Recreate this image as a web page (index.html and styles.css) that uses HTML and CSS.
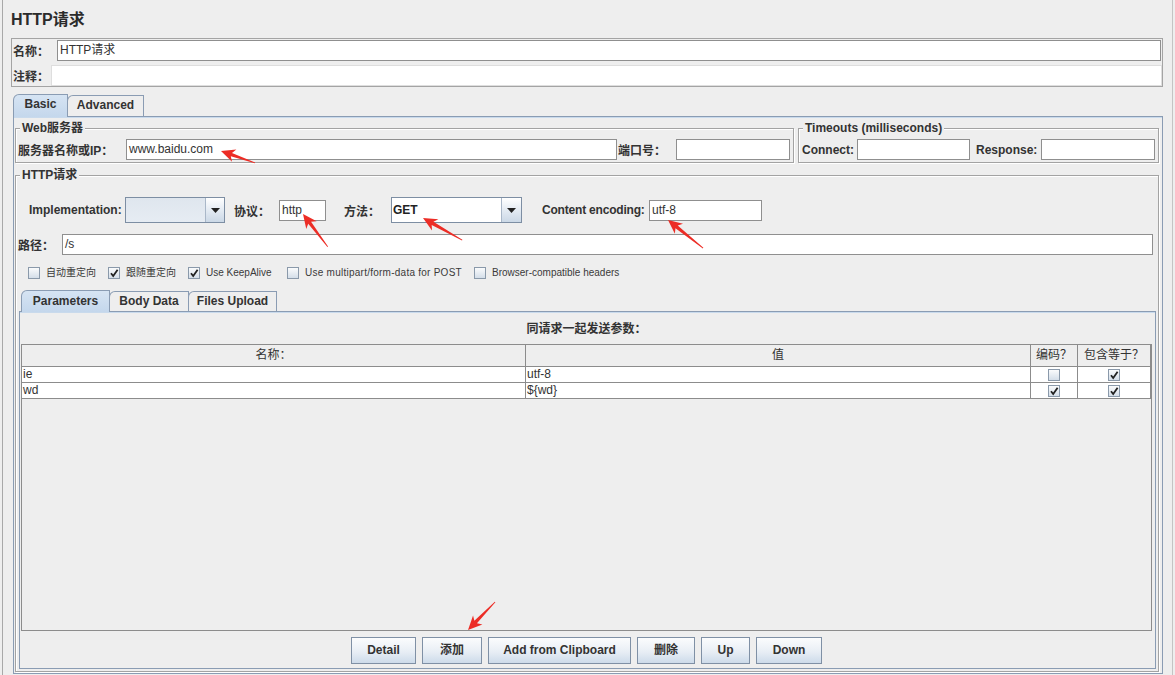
FILE: index.html
```html
<!DOCTYPE html>
<html lang="zh">
<head>
<meta charset="utf-8">
<title>HTTP请求</title>
<link rel="stylesheet" href="styles.css">
</head>
<body>
<div class="window">
  <div class="frame">
    <h1 class="title">HTTP请求</h1>
    <div class="namebox">
      <div class="frow"><span class="lbl w-name">名称：</span><div class="field f-name">HTTP请求</div></div>
      <div class="frow"><span class="lbl w-comment">注释：</span><div class="field f-comment"></div></div>
    </div>

    <div class="tabs outer-tabs">
      <div class="tab active t-basic">Basic</div>
      <div class="tab t-adv">Advanced</div>
    </div>
    <div class="tabpanel outer-panel">
      <div class="toprow">
        <fieldset class="group g-web">
          <legend>Web服务器</legend>
          <div class="frow grow-row">
            <span class="lbl w-host">服务器名称或IP：</span>
            <div class="field f-host">www.baidu.com</div>
            <span class="lbl w-port">端口号：</span>
            <div class="field f-port"></div>
          </div>
        </fieldset>
        <fieldset class="group g-timeout">
          <legend>Timeouts (milliseconds)</legend>
          <div class="frow grow-row">
            <span class="lbl w-connect">Connect:</span>
            <div class="field f-connect"></div>
            <span class="lbl w-response">Response:</span>
            <div class="field f-response"></div>
          </div>
        </fieldset>
      </div>

      <fieldset class="group g-http">
        <legend>HTTP请求</legend>
        <div class="frow impl-row">
          <span class="lbl w-impl">Implementation:</span>
          <div class="combo c-impl">
            <div class="combo-value"></div>
            <div class="combo-btn"><svg width="9" height="5" viewBox="0 0 9 5"><path d="M0 0H9L4.5 5Z" fill="#222"/></svg></div>
          </div>
          <span class="lbl w-proto">协议：</span>
          <div class="field f-proto">http</div>
          <span class="lbl w-method">方法：</span>
          <div class="combo c-method">
            <div class="combo-value">GET</div>
            <div class="combo-btn"><svg width="9" height="5" viewBox="0 0 9 5"><path d="M0 0H9L4.5 5Z" fill="#222"/></svg></div>
          </div>
          <span class="lbl w-enc">Content encoding:</span>
          <div class="field f-enc">utf-8</div>
        </div>

        <div class="frow path-row">
          <span class="lbl w-path">路径：</span>
          <div class="field f-path">/s</div>
        </div>

        <div class="checks">
          <div class="check ck1"><span class="cb"></span><span>自动重定向</span></div>
          <div class="check ck2"><span class="cb"><svg width="10" height="10" viewBox="0 0 10 10"><path d="M2 5.2L4.2 8L8.6 1.8" fill="none" stroke="#222" stroke-width="1.8"/></svg></span><span>跟随重定向</span></div>
          <div class="check ck3"><span class="cb"><svg width="10" height="10" viewBox="0 0 10 10"><path d="M2 5.2L4.2 8L8.6 1.8" fill="none" stroke="#222" stroke-width="1.8"/></svg></span><span>Use KeepAlive</span></div>
          <div class="check ck4"><span class="cb"></span><span>Use multipart/form-data for POST</span></div>
          <div class="check ck5"><span class="cb"></span><span>Browser-compatible headers</span></div>
        </div>

        <div class="tabs inner-tabs">
          <div class="tab active t-params">Parameters</div>
          <div class="tab t-body">Body Data</div>
          <div class="tab t-files">Files Upload</div>
        </div>
        <div class="tabpanel inner-panel">
          <div class="params-title">同请求一起发送参数：</div>
          <div class="scroll">
            <div class="grid">
              <div class="hd">名称：</div>
              <div class="hd">值</div>
              <div class="hd">编码？</div>
              <div class="hd">包含等于？</div>

              <div class="cell">ie</div>
              <div class="cell">utf-8</div>
              <div class="cell cbcell"><span class="cb"></span></div>
              <div class="cell cbcell"><span class="cb"><svg width="10" height="10" viewBox="0 0 10 10"><path d="M2 5.2L4.2 8L8.6 1.8" fill="none" stroke="#222" stroke-width="1.8"/></svg></span></div>

              <div class="cell">wd</div>
              <div class="cell">${wd}</div>
              <div class="cell cbcell"><span class="cb"><svg width="10" height="10" viewBox="0 0 10 10"><path d="M2 5.2L4.2 8L8.6 1.8" fill="none" stroke="#222" stroke-width="1.8"/></svg></span></div>
              <div class="cell cbcell"><span class="cb"><svg width="10" height="10" viewBox="0 0 10 10"><path d="M2 5.2L4.2 8L8.6 1.8" fill="none" stroke="#222" stroke-width="1.8"/></svg></span></div>
            </div>
          </div>
          <div class="buttons">
            <div class="btn b-detail">Detail</div>
            <div class="btn b-add">添加</div>
            <div class="btn b-clip">Add from Clipboard</div>
            <div class="btn b-del">删除</div>
            <div class="btn b-up">Up</div>
            <div class="btn b-down">Down</div>
          </div>
        </div>
      </fieldset>
    </div>
  </div>

  <svg class="annot" width="1175" height="675" viewBox="0 0 1175 675">
    <g fill="#ec2d26">
      <g transform="translate(221 151) rotate(199.4)"><polygon points="0,0 -14,-6.5 -11,-1.8 -36,-0.4 -36,0.4 -11,1.8 -14,6.5"/></g>
      <g transform="translate(303 214) rotate(232.9)"><polygon points="0,0 -14,-6.5 -11,-1.8 -41,-0.4 -41,0.4 -11,1.8 -14,6.5"/></g>
      <g transform="translate(423 218) rotate(209.4)"><polygon points="0,0 -14,-6.5 -11,-1.8 -45,-0.4 -45,0.4 -11,1.8 -14,6.5"/></g>
      <g transform="translate(668 220) rotate(218.7)"><polygon points="0,0 -14,-6.5 -11,-1.8 -45,-0.4 -45,0.4 -11,1.8 -14,6.5"/></g>
      <g transform="translate(468 630) rotate(134)"><polygon points="0,0 -14,-6.5 -11,-1.8 -39,-0.4 -39,0.4 -11,1.8 -14,6.5"/></g>
    </g>
  </svg>
</div>
</body>
</html>
```

FILE: styles.css
```css
* { box-sizing: border-box; }
html, body { margin: 0; padding: 0; }
body {
  background: #eeeeee;
  font-family: "Liberation Sans", "Noto Sans CJK SC", sans-serif;
  color: #333333;
  font-size: 12px;
}
.window {
  position: relative;
  width: 1175px;
  height: 675px;
  overflow: hidden;
  background: #eeeeee;
}
.frame {
  margin-left: 2px;
  width: 1171px;
  height: 675px;
  border-left: 1px solid #a8a8a8;
  border-right: 1px solid #c4c4c4;
  padding: 10px 0 0 8px;
}
.title {
  margin: 0;
  font-size: 16px;
  font-weight: bold;
  line-height: 20px;
  height: 20px;
  color: #2b2b2b;
}

/* generic rows / labels / fields */
.frow { display: flex; align-items: center; }
.lbl { flex: none; font-weight: bold; font-size: 12px; white-space: nowrap; color: #333; }
.field {
  flex: none;
  height: 21px;
  border: 1px solid #8f8f8f;
  background: #ffffff;
  padding-left: 2px;
  line-height: 19px;
  font-size: 12px;
  white-space: nowrap;
  overflow: hidden;
  color: #333;
}

/* name / comment box */
.namebox {
  margin-top: 8px;
  width: 1152px;
  border: 1px solid #a4a4a4;
  padding-top: 1px;
  display: flex;
  flex-direction: column;
  gap: 4px;
}
.w-name { width: 45px; padding-left: 1px; }
.f-name { width: 1104px; }
.w-comment { width: 39px; padding-left: 1px; }
.f-comment { width: 1111px; border-color: #dedede; }

/* tabs */
.tabs { display: flex; align-items: flex-end; position: relative; z-index: 2; }
.tab {
  flex: none;
  height: 21px;
  border: 1px solid #8a9cb3;
  border-bottom: none;
  border-top-left-radius: 6px;
  background: #eeeeee;
  font-weight: bold;
  font-size: 12px;
  line-height: 18px;
  text-align: center;
  color: #333;
}
.tab + .tab { margin-left: -1px; }
.tab.active {
  background: linear-gradient(#d6e4f3, #c4d7ec);
  margin-bottom: -1px;
  height: 23px;
  line-height: 19px;
  padding-bottom: 1px;
}
.outer-tabs { margin-top: 7px; margin-left: 2px; height: 22px; }
.t-basic { width: 55px; }
.t-adv { width: 77px; }

.tabpanel {
  border: 1px solid #8a9cb3;
  box-shadow: inset 0 1px 0 #c9daec;
  position: relative;
  z-index: 1;
}
.outer-panel {
  margin-left: 2px;
  width: 1150px;
  padding: 4px 3px 1px 1px;
}

/* group boxes (etched) */
.group {
  margin: 0;
  min-width: 0;
  border: 1px solid #a3a3a3;
  box-shadow: inset 1px 1px 0 #ffffff, 1px 1px 0 #ffffff;
  padding: 0 2px 2px 2px;
}
.group legend {
  padding: 0 2px;
  margin-left: 2px;
  font-weight: bold;
  font-size: 12px;
  line-height: 14px;
  height: 14px;
  background: #eeeeee;
  color: #333;
}
.toprow { display: flex; gap: 4px; }
.g-web { width: 779px; }
.g-timeout { width: 361px; }
.grow-row { margin-top: 4px; }

.w-host { width: 108px; }
.f-host { width: 491px; }
.w-port { width: 59px; padding-left: 1px; }
.f-port { width: 114px; }
.w-connect { width: 56px; padding-left: 1px; }
.f-connect { width: 113px; }
.w-response { width: 71px; padding-left: 6px; }
.f-response { width: 114px; }

/* HTTP request group */
.g-http {
  margin-top: 5px;
  width: 1144px;
  padding: 0 3px 2px 2px;
}
.impl-row { margin-top: 15px; height: 26px; padding-left: 11px; }
.w-impl { width: 96px; }
.w-proto { width: 54px; padding-left: 9px; }
.f-proto { width: 47px; }
.w-method { width: 65px; padding-left: 18px; }
.w-enc { width: 127px; padding-left: 20px; letter-spacing: -0.2px; }
.f-enc { width: 113px; }

.combo {
  flex: none;
  display: flex;
  height: 26px;
  border: 1px solid #7d8ea3;
}
.c-impl { width: 100px; }
.c-method { width: 131px; }
.combo-value {
  flex: 1;
  font-size: 12px;
  line-height: 24px;
  padding-left: 1px;
  color: #222;
}
.c-impl .combo-value { background: linear-gradient(#dfe6ee, #e6ecf3); }
.c-method .combo-value { background: #ffffff; font-weight: bold; }
.combo-btn {
  flex: none;
  width: 19px;
  border-left: 1px solid #a9b7c8;
  background: linear-gradient(#ffffff, #e4ebf3 50%, #cbd8e6);
  display: flex;
  align-items: center;
  justify-content: center;
}
.c-method .combo-btn { width: 20px; }

.path-row { margin-top: 11px; }
.w-path { width: 44px; }
.f-path { flex: 1; margin-right: 2px; }

/* checkboxes */
.checks {
  margin-top: 12px;
  height: 12px;
  padding-left: 10px;
  display: flex;
  align-items: center;
}
.check {
  flex: none;
  display: flex;
  align-items: center;
  gap: 6px;
  font-size: 10px;
  line-height: 12px;
  color: #3a3a3a;
  white-space: nowrap;
}
.ck1 { width: 80px; }
.ck2 { width: 80px; }
.ck3 { width: 99px; }
.ck4 { width: 187px; }
.ck4 span:last-child { letter-spacing: 0.25px; }
.cb {
  flex: none;
  width: 12px;
  height: 12px;
  border: 1px solid #8a99aa;
  background: linear-gradient(#fafbfc, #d4dee9);
  display: inline-flex;
  align-items: center;
  justify-content: center;
}

/* inner tabs */
.inner-tabs { margin-top: 11px; margin-left: 3px; height: 21px; }
.t-params { width: 89px; }
.t-body { width: 80px; }
.t-files { width: 89px; }
.inner-tabs .tab.active { height: 22px; line-height: 20px; }
.inner-tabs .tab { height: 20px; line-height: 19px; }

.inner-panel {
  margin-left: 1px;
  width: 1137px;
  padding: 1px 3px 4px 1px;
}
.params-title {
  height: 31px;
  line-height: 33px;
  text-align: center;
  font-weight: bold;
  font-size: 12px;
  color: #333;
}
.scroll {
  width: 1131px;
  height: 287px;
  border: 1px solid #8c8c8c;
  background: #eeeeee;
}
.grid {
  display: grid;
  grid-template-columns: 504px 505px 47px 73px;
  grid-template-rows: 22px 16px 16px;
}
.hd {
  border-right: 1px solid #8c8c8c;
  border-bottom: 1px solid #8c8c8c;
  background: #eeeeee;
  text-align: center;
  font-size: 12px;
  line-height: 21px;
  color: #333;
}
.cell {
  border-right: 1px solid #8c8c8c;
  border-bottom: 1px solid #8c8c8c;
  background: #ffffff;
  font-size: 12px;
  line-height: 15px;
  padding-left: 1px;
  white-space: nowrap;
  color: #333;
}
.cbcell {
  display: flex;
  align-items: center;
  justify-content: center;
  padding-left: 0;
}

/* buttons */
.buttons {
  margin-top: 6px;
  display: flex;
  justify-content: center;
  gap: 6px;
}
.btn {
  flex: none;
  height: 27px;
  border: 1px solid #7f90a5;
  background: linear-gradient(#fbfcfd, #e8eef5 55%, #cddbea);
  font-weight: bold;
  font-size: 12px;
  line-height: 25px;
  text-align: center;
  color: #333;
}
.b-detail { width: 65px; }
.b-add { width: 60px; }
.b-clip { width: 143px; }
.b-del { width: 58px; }
.b-up { width: 49px; }
.b-down { width: 66px; }

/* annotation overlay */
.annot {
  position: absolute;
  left: 0;
  top: 0;
  pointer-events: none;
  z-index: 10;
}
```
